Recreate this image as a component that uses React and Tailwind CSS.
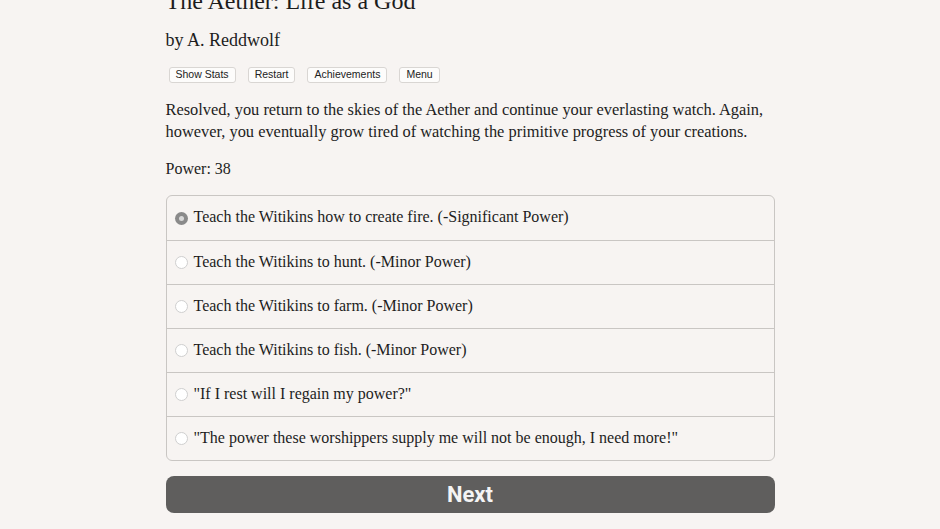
import React from "react";

const serif = { fontFamily: '"Liberation Serif", "DejaVu Serif", serif' };

const choices = [
  "Teach the Witikins how to create fire. (-Significant Power)",
  "Teach the Witikins to hunt. (-Minor Power)",
  "Teach the Witikins to farm. (-Minor Power)",
  "Teach the Witikins to fish. (-Minor Power)",
  "\"If I rest will I regain my power?\"",
  "\"The power these worshippers supply me will not be enough, I need more!\"",
];

function Radio({ checked }) {
  return checked ? (
    <span className="flex h-[13px] w-[13px] shrink-0 items-center justify-center rounded-full bg-[#8a8a8a]">
      <span className="h-[5px] w-[5px] rounded-full bg-[#d8d8d8]" />
    </span>
  ) : (
    <span className="h-[13px] w-[13px] shrink-0 rounded-full border border-[#cfcfcf] bg-white" />
  );
}

export default function App() {
  return (
    <div className="h-[529px] w-[940px] overflow-hidden bg-[#f7f4f2] text-[#1d1d1d]" style={serif}>
      <div className="mx-auto w-[609px] pt-0">
        <h1 className="mt-[-14px] text-[24px] leading-[30px]">The Aether: Life as a God</h1>
        <div className="mt-[14px] text-[18px] leading-[20px]">by A. Reddwolf</div>
        <div className="mt-[17px] flex gap-[12px] pl-[3px]" style={{ fontFamily: '"Liberation Sans", Arial, sans-serif' }}>
          {["Show Stats", "Restart", "Achievements", "Menu"].map((b) => (
            <span
              key={b}
              className="flex h-[16px] items-center rounded-[3px] border border-[#d9d6d3] bg-[#fdfcfb] px-[6px] text-[10.5px] text-[#222]"
            >
              {b}
            </span>
          ))}
        </div>
        <p className="mt-[16px] text-[16.4px] leading-[22px]">
          Resolved, you return to the skies of the Aether and continue your everlasting watch. Again,
          however, you eventually grow tired of watching the primitive progress of your creations.
        </p>
        <p className="mt-[15px] text-[16px] leading-[22px]">Power: 38</p>
        <div className="mt-[15px] overflow-hidden rounded-[6px] border border-[#c9c6c3]">
          {choices.map((c, i) => (
            <div
              key={i}
              className={`flex h-[44px] items-center gap-[6px] pl-[8px] text-[16px] ${i > 0 ? "border-t border-[#c9c6c3]" : ""}`}
            >
              <Radio checked={i === 0} />
              <span className="-mt-[2px]">{c}</span>
            </div>
          ))}
        </div>
        <button
          className="mt-[15px] flex h-[37px] w-full items-center justify-center rounded-[8px] bg-[#5f5e5d] text-[22px] font-bold text-[#f4f4f4]"
          style={{ fontFamily: 'Roboto, "Liberation Sans", sans-serif' }}
        >
          Next
        </button>
      </div>
    </div>
  );
}
